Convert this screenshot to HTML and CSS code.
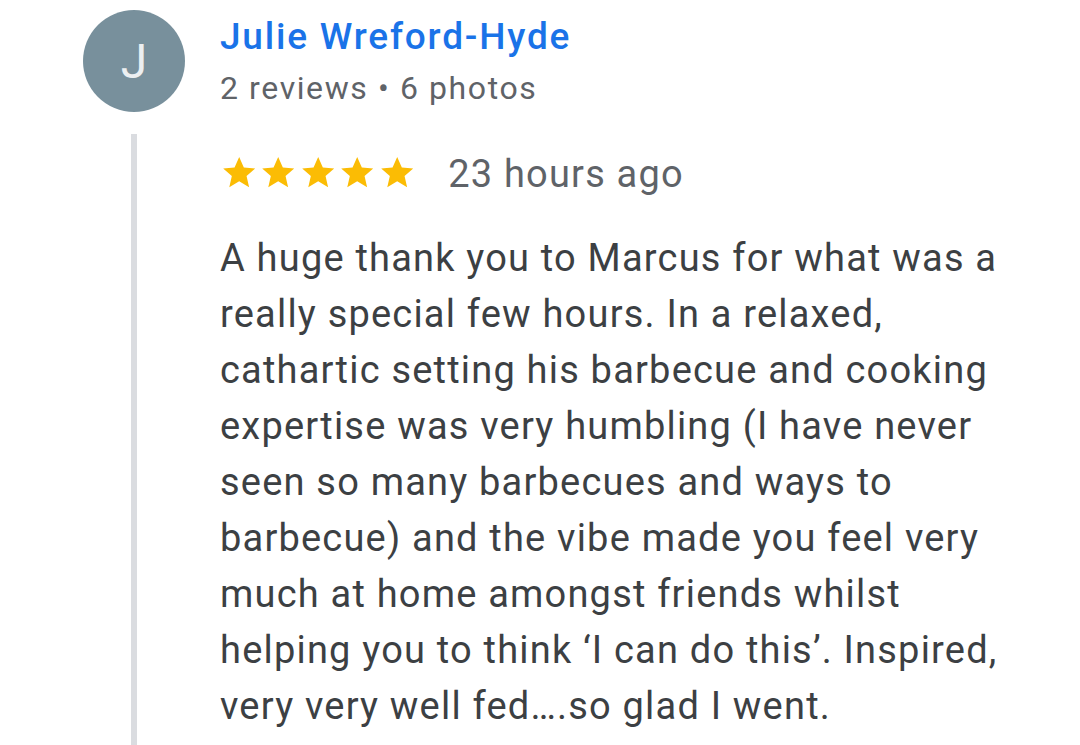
FILE: index.html
```
<!DOCTYPE html>
<html lang="en">
<head>
	<meta charset="UTF-8">
	<title>Review</title>
	<link rel="stylesheet" href="styles.css">
</head>
<body>
	<div class="author">
		<div class="avatar">J</div>
		<div class="info">
			<div class="name">Julie Wreford-Hyde</div>
			<div class="meta">2 reviews &bull; 6 photos</div>
		</div>
	</div>
	<div class="review">
		<div class="rating">
			<div class="stars">
				<svg viewBox="0 0 24 24"><path d="M12 2.5l2.9 6.6 7.1.6-5.4 4.7 1.6 7-6.2-3.7-6.2 3.7 1.6-7L2 9.7l7.1-.6z"/></svg>
				<svg viewBox="0 0 24 24"><path d="M12 2.5l2.9 6.6 7.1.6-5.4 4.7 1.6 7-6.2-3.7-6.2 3.7 1.6-7L2 9.7l7.1-.6z"/></svg>
				<svg viewBox="0 0 24 24"><path d="M12 2.5l2.9 6.6 7.1.6-5.4 4.7 1.6 7-6.2-3.7-6.2 3.7 1.6-7L2 9.7l7.1-.6z"/></svg>
				<svg viewBox="0 0 24 24"><path d="M12 2.5l2.9 6.6 7.1.6-5.4 4.7 1.6 7-6.2-3.7-6.2 3.7 1.6-7L2 9.7l7.1-.6z"/></svg>
				<svg viewBox="0 0 24 24"><path d="M12 2.5l2.9 6.6 7.1.6-5.4 4.7 1.6 7-6.2-3.7-6.2 3.7 1.6-7L2 9.7l7.1-.6z"/></svg>
			</div>
			<span class="when">23 hours ago</span>
		</div>
		<p class="text">A huge thank you to Marcus for what was a really special few hours. In a relaxed, cathartic setting his barbecue and cooking expertise was very humbling (I have never seen so many barbecues and ways to barbecue) and the vibe made you feel very much at home amongst friends whilst helping you to think &lsquo;I can do this&rsquo;. Inspired, very very well fed&hellip;.so glad I went.</p>
	</div>
</body>
</html>
```

FILE: styles.css
```
body {
	margin: 0;
	background: #fff;
	font-family: Roboto, "Noto Sans", sans-serif;
	overflow: hidden;
	height: 745px;}

.author {
	display: flex;
	align-items: flex-start;
	padding: 10px 0 0 83px;}
.avatar {
	width: 102px;
	height: 102px;
	border-radius: 50%;
	background-color: #78909c;
	color: #eceff1;
	font-size: 48px;
	display: flex;
	align-items: center;
	justify-content: center;
	flex-shrink: 0;}
.info {
	margin-left: 35px;
	padding-top: 5px;}
.name {
	color: #1a73e8;
	font-weight: 500;
	font-size: 37px;
	letter-spacing: 1.8px;
	line-height: 44px;}
.meta {
	margin-top: 7px;
	color: #5f6368;
	font-size: 32px;
	letter-spacing: 1.6px;
	line-height: 44px;}

.review {
	margin: 22px 0 0 131px;
	border-left: 6px solid #dadce0;
	padding: 14px 0 40px 83px;}
.rating {
	display: flex;
	align-items: center;
	height: 48px;}
.stars {
	display: flex;
	gap: 1.2px;
	margin-left: -0.5px;}
.stars svg {
	width: 38.4px;
	height: 38.4px;
	fill: #fbbc04;}
.when {
	margin-left: 32px;
	padding-top: 4px;
	color: #5f6368;
	font-size: 38px;
	letter-spacing: 1.2px;
	line-height: 48px;}
.text {
	margin: 34px 0 0;
	color: #3c4043;
	font-size: 38px;
	letter-spacing: 1.2px;
	line-height: 56px;
	width: 800px;}
```
